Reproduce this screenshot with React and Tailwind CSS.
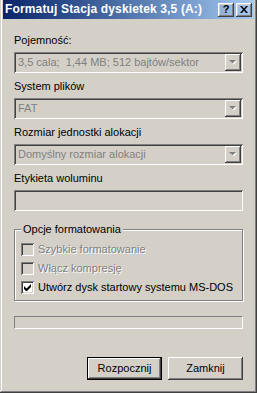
const raised =
  "shadow-[inset_-1px_-1px_0_#404040,inset_1px_1px_0_#ffffff,inset_-2px_-2px_0_#808080,inset_2px_2px_0_#d4d0c8]";
const sunken =
  "shadow-[inset_1px_1px_0_#808080,inset_-1px_-1px_0_#ffffff,inset_2px_2px_0_#404040,inset_-2px_-2px_0_#d4d0c8]";

function Arrow() {
  return (
    <svg width="8" height="5" viewBox="0 0 8 5" className="block">
      <path d="M1 1h7L4.5 4.5z" fill="#ffffff" />
      <path d="M0 0h7L3.5 3.5z" fill="#808080" />
    </svg>
  );
}

function Combo({ text }) {
  return (
    <div className={`mx-[14px] mt-[5px] h-[21px] flex items-center pl-[4px] pr-[2px] ${sunken}`}>
      <span className="flex-1 whitespace-pre text-[#808080] leading-[13px]">{text}</span>
      <div className={`w-[16px] h-[17px] flex items-center justify-center ${raised}`}>
        <Arrow />
      </div>
    </div>
  );
}

function Label({ children, className = "mt-[7px]" }) {
  return <div className={`mx-[14px] h-[13px] leading-[13px] ${className}`}>{children}</div>;
}

function Check({ label, checked, disabled, className = "" }) {
  return (
    <div className={`flex items-center h-[13px] ${className}`}>
      <div
        className={`w-[13px] h-[13px] flex items-center justify-center ${sunken} ${
          disabled ? "bg-[#d4d0c8]" : "bg-white"
        }`}
      >
        {checked && (
          <svg width="7" height="7" viewBox="0 0 7 7" className="block">
            <path d="M0 2v3l2 2h1l4-4V0L2.5 4.5z" fill="#000" />
          </svg>
        )}
      </div>
      <span
        className={`ml-[4px] leading-[13px] ${
          disabled ? "text-[#808080] [text-shadow:1px_1px_0_#ffffff]" : "text-black"
        }`}
      >
        {label}
      </span>
    </div>
  );
}

function Button({ children, isDefault }) {
  return (
    <div
      className={`w-[75px] h-[23px] flex items-center justify-center ${
        isDefault
          ? "border border-black shadow-[inset_-1px_-1px_0_#404040,inset_1px_1px_0_#ffffff,inset_-2px_-2px_0_#808080]"
          : raised
      }`}
    >
      {children}
    </div>
  );
}

export default function App() {
  return (
    <div className="w-[257px] h-[393px] bg-[#d4d0c8] overflow-hidden text-[11px] text-black font-['Liberation_Sans',Arial,sans-serif] shadow-[inset_-1px_-1px_0_#404040,inset_1px_0_0_#d4d0c8,inset_-2px_-2px_0_#808080,inset_2px_0_0_#ffffff]">
      <div className="ml-[3px] mr-[3px] h-[19px] flex items-center bg-gradient-to-r from-[#0a246a] to-[#a6caf0]">
        <span className="pl-[2px] flex-1 text-white font-bold text-[12px] tracking-[0.15px] leading-[15px] whitespace-nowrap">
          Formatuj Stacja dyskietek 3,5 (A:)
        </span>
        <div className={`w-[16px] h-[14px] flex items-center justify-center font-bold text-[11px] leading-none ${raised}`}>
          ?
        </div>
        <div className={`ml-[2px] mr-[2px] w-[16px] h-[14px] flex items-center justify-center ${raised}`}>
          <svg width="8" height="7" viewBox="0 0 8 7" className="block">
            <path d="M0 0h2l2 2.5L6 0h2L5 3.5 8 7H6L4 4.5 2 7H0l3-3.5z" fill="#000" />
          </svg>
        </div>
      </div>

      <Label className="mt-[15px]">Pojemność:</Label>
      <Combo text="3,5 cala;  1,44 MB; 512 bajtów/sektor" />
      <Label>System plików</Label>
      <Combo text="FAT" />
      <Label>Rozmiar jednostki alokacji</Label>
      <Combo text="Domyślny rozmiar alokacji" />
      <Label>Etykieta woluminu</Label>
      <div className={`mx-[14px] mt-[5px] h-[21px] ${sunken}`} />

      <div className="relative mx-[14px] mt-[18px] h-[72px] border border-[#808080] shadow-[inset_1px_1px_0_#ffffff,1px_1px_0_#ffffff] pl-[6px] pt-[13px]">
        <span className="absolute left-[6px] top-[-7px] px-[2px] bg-[#d4d0c8] leading-[13px]">
          Opcje formatowania
        </span>
        <Check label="Szybkie formatowanie" disabled />
        <Check label="Włącz kompresję" disabled className="mt-[6px]" />
        <Check label="Utwórz dysk startowy systemu MS-DOS" checked className="mt-[6px]" />
      </div>

      <div className="mx-[14px] mt-[15px] h-[13px] border border-t-[#808080] border-l-[#808080] border-b-white border-r-white" />

      <div className="mr-[14px] mt-[28px] flex justify-end gap-[6px]">
        <Button isDefault>Rozpocznij</Button>
        <Button>Zamknij</Button>
      </div>
    </div>
  );
}
